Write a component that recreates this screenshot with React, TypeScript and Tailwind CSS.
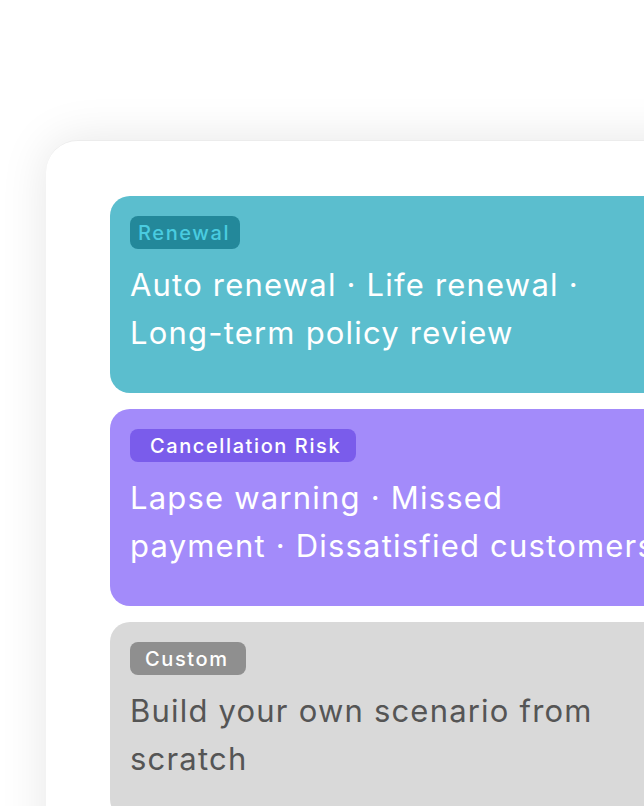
import React from 'react';

type Tile = {
  tag: string;
  lines: string[];
  tileClass: string;
  badgeClass: string;
  textClass: string;
};

const tiles: Tile[] = [
  {
    tag: 'Renewal',
    lines: ['Auto renewal · Life renewal ·', 'Long-term policy review'],
    tileClass: 'bg-[#5bbece]',
    badgeClass: 'bg-[#23889a] text-[#4acce0] pl-[8px] pr-[10px]',
    textClass: 'text-white',
  },
  {
    tag: 'Cancellation Risk',
    lines: ['Lapse warning · Missed', 'payment · Dissatisfied customers'],
    tileClass: 'bg-[#a38bfa]',
    badgeClass: 'bg-[#7a5ceb] text-white pl-[20px] pr-[15px]',
    textClass: 'text-white',
  },
  {
    tag: 'Custom',
    lines: ['Build your own scenario from', 'scratch'],
    tileClass: 'bg-[#d9d9d9]',
    badgeClass: 'bg-[#8f8f8f] text-white pl-[15px] pr-[17px]',
    textClass: 'text-[#555555]',
  },
];

export default function App() {
  return (
    <div
      className="w-[644px] h-[806px] overflow-hidden bg-white"
      style={{ fontFamily: 'Inter, "Noto Sans", sans-serif' }}
    >
      <div className="pt-[140px] pl-[46px]">
        <div className="w-[760px] h-[800px] bg-white rounded-[32px] border-t border-[#ececec] shadow-[0_0_48px_rgba(0,0,0,0.1)] pt-[55px] pl-[64px]">
          <div className="flex flex-col gap-[16px]">
            {tiles.map((t) => (
              <div
                key={t.tag}
                className={`h-[197px] w-[640px] rounded-[20px] overflow-hidden pt-[20px] pl-[20px] ${t.tileClass}`}
              >
                <span
                  className={`inline-flex items-center h-[33px] rounded-[8px] text-[20px] font-medium tracking-[1.6px] ${t.badgeClass}`}
                >
                  {t.tag}
                </span>
                <div
                  className={`mt-[12px] text-[31px] leading-[48px] tracking-[1.2px] ${t.textClass}`}
                >
                  {t.lines.map((l) => (
                    <div key={l} className="whitespace-nowrap">
                      {l}
                    </div>
                  ))}
                </div>
              </div>
            ))}
          </div>
        </div>
      </div>
    </div>
  );
}
